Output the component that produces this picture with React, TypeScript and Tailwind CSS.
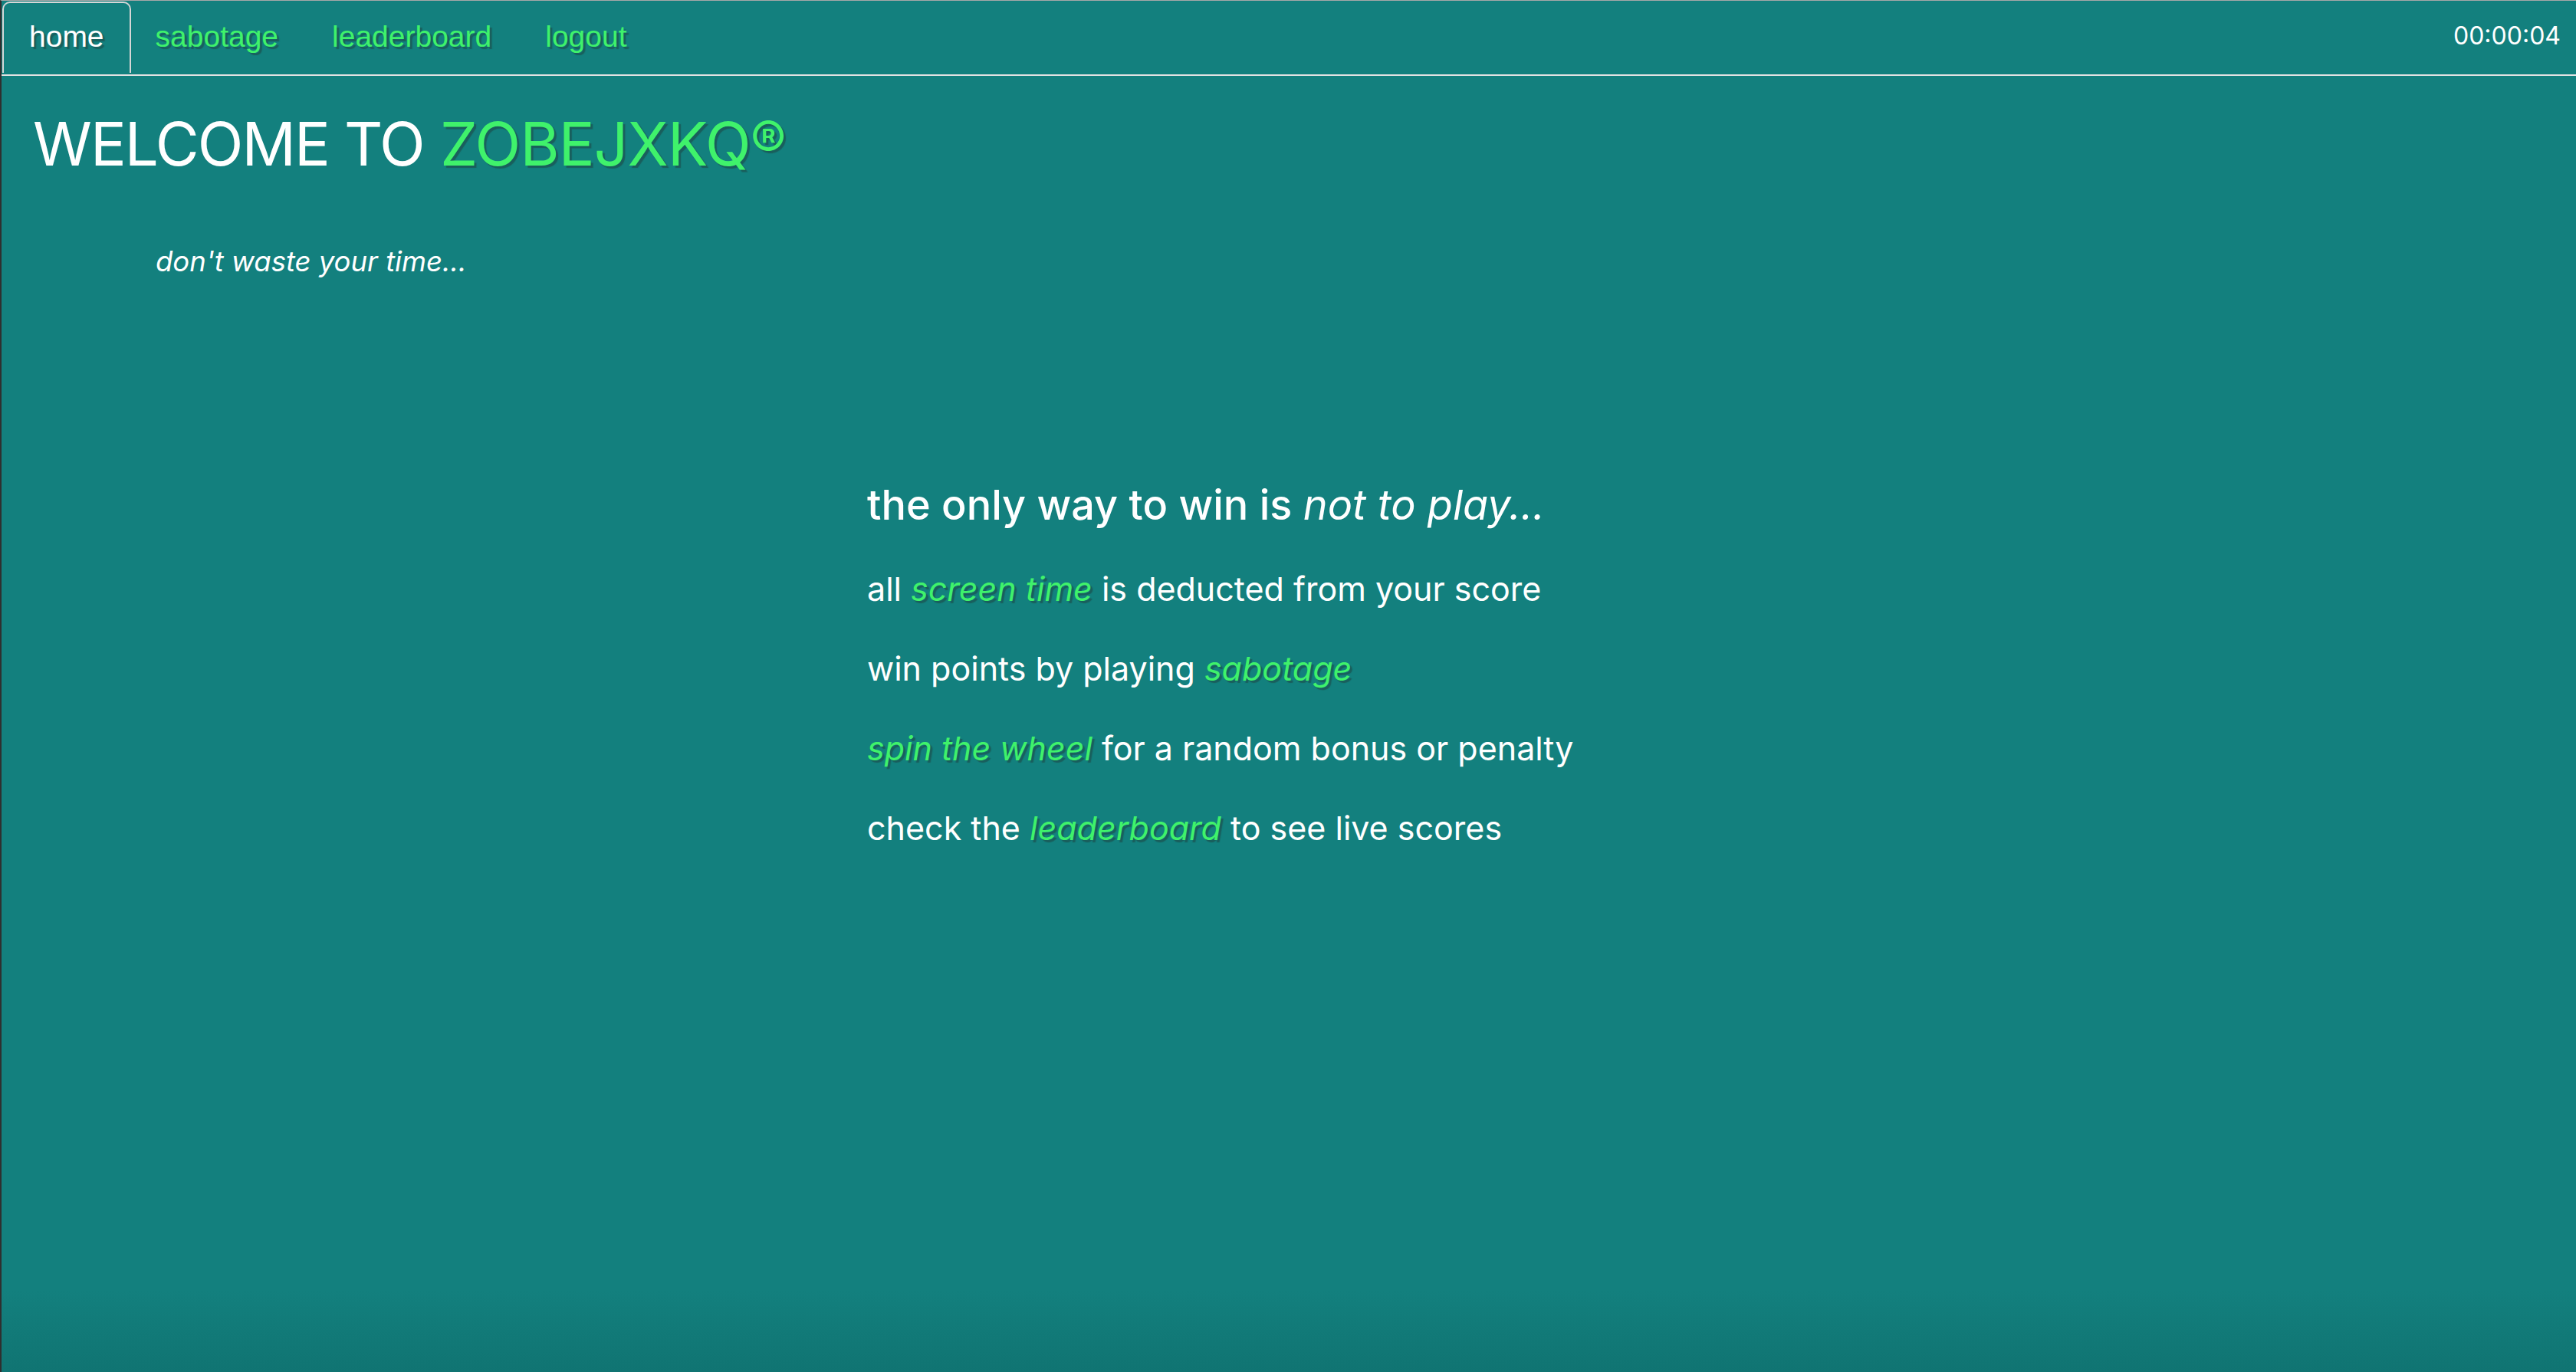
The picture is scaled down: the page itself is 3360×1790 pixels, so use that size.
import React from "react";

const shadow = "[text-shadow:3px_3px_1px_rgba(30,72,70,0.6)]";

export default function App() {
  return (
    <div className="w-[3360px] h-[1790px] overflow-hidden border-l-2 border-t border-l-[#2f2f2f] border-t-[#a8a8a8] bg-[linear-gradient(to_bottom,#13807e_0%,#13807e_94%,#107472_100%)] text-white font-['Inter',sans-serif]">
      <nav className="h-[98px] flex items-stretch justify-between border-b-2 border-[#e2e2e2]">
        <ul className="flex items-stretch pt-[1px] pl-[1px] gap-[2px] font-['Liberation_Sans',Arial,sans-serif] text-[39px]">
          <li className="flex items-center px-[33px] pb-[2px] border-2 border-b-0 border-[#d6d6d6] rounded-t-[10px] mb-[2px] text-white [text-shadow:3px_3px_1px_rgba(30,72,70,0.6)]">
            home
          </li>
          <li className={`flex items-center pl-[30px] pr-[34px] pb-[2px] text-[#3ff26b] ${shadow}`}>sabotage</li>
          <li className={`flex items-center px-[34px] pb-[2px] text-[#3ff26b] ${shadow}`}>leaderboard</li>
          <li className={`flex items-center px-[34px] pb-[2px] text-[#3ff26b] ${shadow}`}>logout</li>
        </ul>
        <div className="flex items-center pr-[20px] pb-[4px] text-[32px] text-white">00:00:04</div>
      </nav>

      <h1 className="mt-[50px] ml-[41px] text-[78px] leading-none font-normal tracking-[-0.01em]">
        <span className="tracking-[-0.025em]">WELCOME TO</span>{" "}
        <span className={`text-[#3ff26b] ${shadow}`}>
          ZOBEJXKQ<span className="align-top text-[70px] leading-none">®</span>
        </span>
      </h1>

      <p className="mt-[96px] ml-[201px] text-[36.5px] italic leading-none">don't waste your time...</p>

      <div className="mt-[272px] ml-[1129px] flex flex-col text-[43px] leading-none">
        <p className="text-[54px] font-medium">
          the only way to win is <span className="italic font-normal">not to play...</span>
        </p>
        <p className="mt-[61px]">
          all <span className={`italic text-[#3ff26b] ${shadow}`}>screen time</span> is deducted from your score
        </p>
        <p className="mt-[61px]">
          win points by playing <span className={`italic text-[#3ff26b] ${shadow}`}>sabotage</span>
        </p>
        <p className="mt-[61px]">
          <span className={`italic text-[#3ff26b] ${shadow}`}>spin the wheel</span> for a random bonus or penalty
        </p>
        <p className="mt-[61px]">
          check the <span className={`italic text-[#3ff26b] ${shadow}`}>leaderboard</span> to see live scores
        </p>
      </div>
    </div>
  );
}
